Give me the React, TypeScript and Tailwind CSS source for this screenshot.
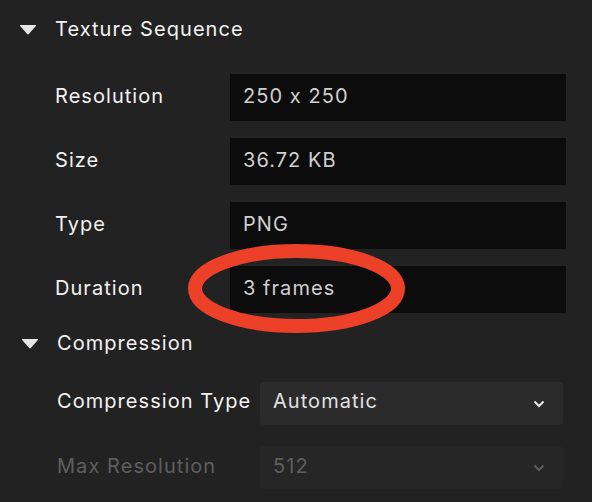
import React from "react";

const textureRows = [
  { label: "Resolution", value: "250 x 250" },
  { label: "Size", value: "36.72 KB" },
  { label: "Type", value: "PNG" },
  { label: "Duration", value: "3 frames" },
];

function Caret() {
  return (
    <svg width="18" height="11" viewBox="0 0 18 11" className="shrink-0">
      <path d="M1.5 1 H16.5 Q17.6 1 16.9 2 L9.8 10 Q9 10.8 8.2 10 L1.1 2 Q0.4 1 1.5 1 Z" fill="#e6e6e6" />
    </svg>
  );
}

function Chevron({ dim }: { dim?: boolean }) {
  return (
    <svg width="12" height="8" viewBox="0 0 12 8">
      <path
        d="M1.5 1.5 L6 6 L10.5 1.5"
        fill="none"
        stroke={dim ? "#5c5c5c" : "#e8e8e8"}
        strokeWidth="2"
      />
    </svg>
  );
}

export default function App() {
  return (
    <div
      className="relative w-[592px] h-[502px] overflow-hidden bg-[#222222] text-[20px] tracking-[1.05px]"
      style={{ fontFamily: "Inter, 'Noto Sans', sans-serif" }}
    >
      {/* Texture Sequence */}
      <div className="flex items-center gap-[18px] pl-[19px] pt-[15px] h-[43px]">
        <Caret />
        <span className="text-[#f2f2f2]">Texture Sequence</span>
      </div>

      <div className="mt-[31px] flex flex-col gap-[17px] pl-[55px]">
        {textureRows.map((row) => (
          <div key={row.label} className="flex items-center">
            <span className="w-[175px] pb-[4px] text-[#f2f2f2]">{row.label}</span>
            <div className="w-[336px] h-[47px] bg-[#0c0c0c] flex items-center pl-[13px] pb-[3px] text-[#cfcfcf]">
              {row.value}
            </div>
          </div>
        ))}
      </div>

      {/* Compression */}
      <div className="flex items-center gap-[18px] pl-[21px] mt-[16px] h-[28px]">
        <Caret />
        <span className="text-[#f2f2f2]">Compression</span>
      </div>

      <div className="mt-[25px] flex flex-col gap-[21px] pl-[57px]">
        <div className="flex items-center">
          <span className="w-[203px] pb-[5px] text-[#f2f2f2]">Compression Type</span>
          <div className="w-[303px] h-[43px] rounded-[4px] bg-[#2b2b2b] flex items-center justify-between pl-[13px] pr-[18px] text-[#e0e0e0]">
            <span className="pb-[5px]">Automatic</span>
            <Chevron />
          </div>
        </div>
        <div className="flex items-center">
          <span className="w-[203px] pb-[4px] text-[#5e5e5e]">Max Resolution</span>
          <div className="w-[303px] h-[43px] rounded-[4px] bg-[#262626] flex items-center justify-between pl-[13px] pr-[18px] text-[#5e5e5e]">
            <span className="pb-[4px]">512</span>
            <Chevron dim />
          </div>
        </div>
      </div>

      {/* annotation */}
      <svg className="absolute left-0 top-0 pointer-events-none" width="592" height="502">
        <ellipse cx="296.5" cy="288.5" rx="101.5" ry="37.5" fill="none" stroke="#ec4128" strokeWidth="14" />
      </svg>
    </div>
  );
}
